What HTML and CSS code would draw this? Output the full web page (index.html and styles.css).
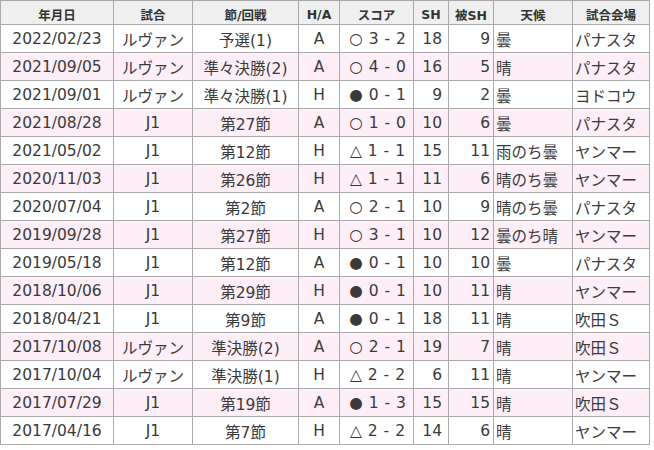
FILE: index.html
```html
<!DOCTYPE html>
<html lang="ja">
<head>
<meta charset="utf-8">
<title>試合結果</title>
<link rel="stylesheet" href="styles.css">
</head>
<body>
<table class="results">
  <colgroup>
    <col class="c-date"><col class="c-comp"><col class="c-round"><col class="c-ha"><col class="c-score"><col class="c-sh"><col class="c-osh"><col class="c-weather"><col class="c-venue">
  </colgroup>
  <thead>
    <tr><th>年月日</th><th>試合</th><th>節/回戦</th><th>H/A</th><th>スコア</th><th>SH</th><th>被SH</th><th>天候</th><th>試合会場</th></tr>
  </thead>
  <tbody>
    <tr><td>2022/02/23</td><td>ルヴァン</td><td>予選(1)</td><td>A</td><td class="score">○ 3 - 2</td><td class="num">18</td><td class="onum">9</td><td class="left">曇</td><td class="left">パナスタ</td></tr>
    <tr><td>2021/09/05</td><td>ルヴァン</td><td>準々決勝(2)</td><td>A</td><td class="score">○ 4 - 0</td><td class="num">16</td><td class="onum">5</td><td class="left">晴</td><td class="left">パナスタ</td></tr>
    <tr><td>2021/09/01</td><td>ルヴァン</td><td>準々決勝(1)</td><td>H</td><td class="score">● 0 - 1</td><td class="num">9</td><td class="onum">2</td><td class="left">曇</td><td class="left">ヨドコウ</td></tr>
    <tr><td>2021/08/28</td><td>J1</td><td>第27節</td><td>A</td><td class="score">○ 1 - 0</td><td class="num">10</td><td class="onum">6</td><td class="left">曇</td><td class="left">パナスタ</td></tr>
    <tr><td>2021/05/02</td><td>J1</td><td>第12節</td><td>H</td><td class="score">△ 1 - 1</td><td class="num">15</td><td class="onum">11</td><td class="left">雨のち曇</td><td class="left">ヤンマー</td></tr>
    <tr><td>2020/11/03</td><td>J1</td><td>第26節</td><td>H</td><td class="score">△ 1 - 1</td><td class="num">11</td><td class="onum">6</td><td class="left">晴のち曇</td><td class="left">ヤンマー</td></tr>
    <tr><td>2020/07/04</td><td>J1</td><td>第2節</td><td>A</td><td class="score">○ 2 - 1</td><td class="num">10</td><td class="onum">9</td><td class="left">晴のち曇</td><td class="left">パナスタ</td></tr>
    <tr><td>2019/09/28</td><td>J1</td><td>第27節</td><td>H</td><td class="score">○ 3 - 1</td><td class="num">10</td><td class="onum">12</td><td class="left">曇のち晴</td><td class="left">ヤンマー</td></tr>
    <tr><td>2019/05/18</td><td>J1</td><td>第12節</td><td>A</td><td class="score">● 0 - 1</td><td class="num">10</td><td class="onum">10</td><td class="left">曇</td><td class="left">パナスタ</td></tr>
    <tr><td>2018/10/06</td><td>J1</td><td>第29節</td><td>H</td><td class="score">● 0 - 1</td><td class="num">10</td><td class="onum">11</td><td class="left">晴</td><td class="left">ヤンマー</td></tr>
    <tr><td>2018/04/21</td><td>J1</td><td>第9節</td><td>A</td><td class="score">● 0 - 1</td><td class="num">18</td><td class="onum">11</td><td class="left">晴</td><td class="left">吹田Ｓ</td></tr>
    <tr><td>2017/10/08</td><td>ルヴァン</td><td>準決勝(2)</td><td>A</td><td class="score">○ 2 - 1</td><td class="num">19</td><td class="onum">7</td><td class="left">晴</td><td class="left">吹田Ｓ</td></tr>
    <tr><td>2017/10/04</td><td>ルヴァン</td><td>準決勝(1)</td><td>H</td><td class="score">△ 2 - 2</td><td class="num">6</td><td class="onum">11</td><td class="left">晴</td><td class="left">ヤンマー</td></tr>
    <tr><td>2017/07/29</td><td>J1</td><td>第19節</td><td>A</td><td class="score">● 1 - 3</td><td class="num">15</td><td class="onum">15</td><td class="left">晴</td><td class="left">吹田Ｓ</td></tr>
    <tr><td>2017/04/16</td><td>J1</td><td>第7節</td><td>H</td><td class="score">△ 2 - 2</td><td class="num">14</td><td class="onum">6</td><td class="left">晴</td><td class="left">ヤンマー</td></tr>
  </tbody>
</table>
</body>
</html>
```

FILE: styles.css
```css
html, body {
  margin: 0;
  padding: 0;
  background: #fff;
}

.results {
  border-collapse: collapse;
  table-layout: fixed;
  width: 649px;
  font-family: "DejaVu Sans", "Noto Sans CJK JP", sans-serif;
  font-size: 15.5px;
  color: #3a3a3a;
}

.c-date { width: 113px; }
.c-comp { width: 79px; }
.c-round { width: 106px; }
.c-ha { width: 41px; }
.c-score { width: 74px; }
.c-sh { width: 35px; }
.c-osh { width: 45px; }
.c-weather { width: 79px; }
.c-venue { width: 77px; }

.results th,
.results td {
  border: 1px solid #aaa;
  padding: 0;
  white-space: nowrap;
  overflow: hidden;
}

.results th {
  background: #efefef;
  color: #333;
  font-size: 12.5px;
  font-weight: bold;
  height: 24px;
  padding-top: 3px;
  box-sizing: border-box;
  text-align: center;
}

.results td {
  height: 27px;
  text-align: center;
}

.results tbody tr:nth-child(even) td {
  background: #fdeef7;
}

.results td.score {
  word-spacing: 1px;
  padding-left: 2px;
}

.results td.num {
  text-align: right;
  padding-right: 6px;
}

.results td.onum {
  text-align: right;
  padding-right: 3px;
}

.results td.left {
  text-align: left;
  padding-left: 2px;
}
```
